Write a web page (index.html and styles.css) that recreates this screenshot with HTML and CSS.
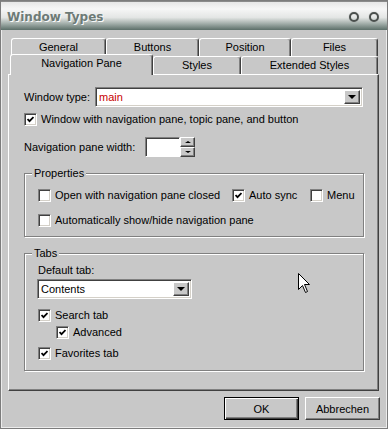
FILE: index.html
```html
<!DOCTYPE html>
<html lang="en">
<head>
<meta charset="UTF-8">
<title>Window Types</title>
<link rel="stylesheet" href="styles.css">
</head>
<body>

  <div class="window">
    <div class="titlebar">
      <span class="title">Window Types</span>
      <span class="title-btns"><span class="ring"></span><span class="ring"></span></span>
    </div>

    <div class="tabs">
      <div class="tab-row back">
        <div class="tab t-general">General</div>
        <div class="tab t-buttons">Buttons</div>
        <div class="tab t-position">Position</div>
        <div class="tab t-files">Files</div>
      </div>
      <div class="tab-row front">
        <div class="tab active t-nav">Navigation Pane</div>
        <div class="tab t-styles">Styles</div>
        <div class="tab t-ext">Extended Styles</div>
      </div>
    </div>

    <div class="panel">
      <div class="row row-type">
        <label class="lbl-type">Window type:</label>
        <div class="combo combo-type">
          <span class="combo-text red">main</span>
          <span class="drop"><span class="arrow"></span></span>
        </div>
      </div>

      <div class="check check-main">
        <span class="cb on"><svg width="7" height="7" viewBox="0 0 7 7"><path d="M0.5 3 L2.5 5.2 L6.5 1" fill="none" stroke="#000" stroke-width="1.8"/></svg></span>
        <span>Window with navigation pane, topic pane, and button</span>
      </div>

      <div class="row row-width">
        <label class="lbl-width">Navigation pane width:</label>
        <div class="spin">
          <span class="spin-input"></span>
          <span class="spin-btns">
            <span class="spin-btn"><span class="arrow up"></span></span>
            <span class="spin-btn"><span class="arrow small"></span></span>
          </span>
        </div>
      </div>

      <div class="group group-props">
        <span class="group-title">Properties</span>
        <div class="check-line first">
          <div class="check w-open"><span class="cb"></span><span>Open with navigation pane closed</span></div>
          <div class="check w-sync"><span class="cb on"><svg width="7" height="7" viewBox="0 0 7 7"><path d="M0.5 3 L2.5 5.2 L6.5 1" fill="none" stroke="#000" stroke-width="1.8"/></svg></span><span>Auto sync</span></div>
          <div class="check"><span class="cb"></span><span>Menu</span></div>
        </div>
        <div class="check-line second">
          <div class="check"><span class="cb"></span><span>Automatically show/hide navigation pane</span></div>
        </div>
      </div>

      <div class="group group-tabs">
        <span class="group-title">Tabs</span>
        <div class="lbl-default">Default tab:</div>
        <div class="combo combo-default">
          <span class="combo-text">Contents</span>
          <span class="drop"><span class="arrow"></span></span>
        </div>
        <div class="check c-search"><span class="cb on"><svg width="7" height="7" viewBox="0 0 7 7"><path d="M0.5 3 L2.5 5.2 L6.5 1" fill="none" stroke="#000" stroke-width="1.8"/></svg></span><span>Search tab</span></div>
        <div class="check c-adv"><span class="cb on"><svg width="7" height="7" viewBox="0 0 7 7"><path d="M0.5 3 L2.5 5.2 L6.5 1" fill="none" stroke="#000" stroke-width="1.8"/></svg></span><span>Advanced</span></div>
        <div class="check c-fav"><span class="cb on"><svg width="7" height="7" viewBox="0 0 7 7"><path d="M0.5 3 L2.5 5.2 L6.5 1" fill="none" stroke="#000" stroke-width="1.8"/></svg></span><span>Favorites tab</span></div>
      </div>
    </div>

    <div class="footer">
      <button class="btn default">OK</button>
      <button class="btn">Abbrechen</button>
    </div>

    <svg class="cursor" width="13" height="21" viewBox="0 0 13 21">
      <path d="M0.5 0.5 L0.5 16.5 L4.5 12.5 L7.5 19.5 L9.5 18.5 L6.5 11.5 L11.5 11.5 Z" fill="#fff" stroke="#000" stroke-width="1"/>
    </svg>
  </div>

</body>
</html>
```

FILE: styles.css
```css
body {
  margin: 0;
  font-family: "Liberation Sans", Arial, sans-serif;
  font-size: 11px;
  color: #000;
}

.window {
  position: relative;
  width: 388px;
  height: 429px;
  box-sizing: border-box;
  background: #c8c8c8;
  border: 1px solid #7c7c7c;
  box-shadow: inset 1px 1px 0 #ececec, inset -1px -1px 0 #ececec;
}

/* title bar */
.titlebar {
  height: 28px;
  display: flex;
  align-items: center;
  justify-content: space-between;
  padding: 0 8px 0 6px;
  border-top: 1px solid #8a8a8a;
  background: linear-gradient(#e6e6e6 0%, #f6f6f6 25%, #e4e6e5 55%, #a9b4b0 75%, #5c6f69 100%);
}

.title {
  font-family: "DejaVu Sans", Verdana, sans-serif;
  font-weight: bold;
  font-size: 12px;
  color: #6d7a76;
  text-shadow: 1px 1px 0 #fafafa;
  margin-top: 2px;
}

.title-btns {
  display: flex;
  gap: 10px;
  margin-top: 1px;
}

.ring {
  width: 6px;
  height: 6px;
  border: 2px solid #4a4f4d;
  border-radius: 50%;
  box-shadow: 0 0 1px #888;
}

/* tabs */
.tabs {
  margin-top: 8px;
  padding-left: 10px;
}

.tab-row {
  display: flex;
  align-items: flex-end;
  height: 18px;
}

.tab-row.front {
  margin-left: -1px;
}

.tab {
  position: relative;
  box-sizing: border-box;
  height: 18px;
  line-height: 17px;
  text-align: center;
  border-top: 1px solid #fff;
  border-left: 1px solid #fff;
  border-right: 1px solid #404040;
  border-radius: 3px 3px 0 0;
  box-shadow: inset -1px 0 0 #808080;
  background: #c8c8c8;
}

.t-general { width: 95px; }
.t-buttons { width: 93px; }
.t-position { width: 92px; }
.t-files { width: 87px; }
.t-nav { width: 143px; }
.t-styles { width: 88px; }
.t-ext { width: 137px; }

.tab.active {
  z-index: 2;
  height: 21px;
  line-height: 16px;
  margin-bottom: -1px;
}

/* main panel */
.panel {
  margin-left: 7px;
  width: 371px;
  height: 317px;
  box-sizing: border-box;
  padding: 12px 0 0 15px;
  border-top: 1px solid #fff;
  border-left: 1px solid #fff;
  border-right: 1px solid #404040;
  border-bottom: 1px solid #404040;
  box-shadow: inset -1px -1px 0 #808080;
}

.row {
  display: flex;
  align-items: center;
  height: 20px;
}

.lbl-type { width: 71px; }
.lbl-width { width: 121px; }
.row-width { margin-top: 11px; }

.combo {
  display: flex;
  box-sizing: border-box;
  height: 20px;
  background: #fff;
  border: 1px solid;
  border-color: #808080 #fff #fff #808080;
  box-shadow: inset 1px 1px 0 #404040, inset -1px -1px 0 #d4d0c8;
  padding: 2px;
}

.combo-type { width: 268px; }

.combo-default {
  width: 155px;
  margin: 2px 0 0 -1px;
}

.combo-text {
  flex: 1;
  line-height: 14px;
  padding-left: 1px;
}

.red { color: #c80000; }

.drop {
  width: 16px;
  display: flex;
  align-items: center;
  justify-content: center;
  box-sizing: border-box;
  background: #c8c8c8;
  border: 1px solid;
  border-color: #fff #404040 #404040 #fff;
  box-shadow: inset -1px -1px 0 #808080;
}

.arrow {
  width: 0;
  height: 0;
  border-left: 4px solid transparent;
  border-right: 4px solid transparent;
  border-top: 4px solid #000;
}

.arrow.small {
  border-left-width: 3px;
  border-right-width: 3px;
  border-top-width: 2px;
}

.arrow.up {
  border-left: 3px solid transparent;
  border-right: 3px solid transparent;
  border-top: 0;
  border-bottom: 2px solid #000;
}

/* spin box */
.spin {
  display: flex;
  height: 20px;
}

.spin-input {
  width: 35px;
  box-sizing: border-box;
  background: #fff;
  border: 1px solid;
  border-color: #808080 #fff #fff #808080;
  box-shadow: inset 1px 1px 0 #404040;
}

.spin-btns {
  display: flex;
  flex-direction: column;
  width: 15px;
}

.spin-btn {
  flex: 1;
  display: flex;
  align-items: center;
  justify-content: center;
  box-sizing: border-box;
  border: 1px solid;
  border-color: #fff #404040 #404040 #fff;
  box-shadow: inset -1px -1px 0 #808080;
}

/* checkboxes */
.check {
  display: flex;
  align-items: center;
  gap: 4px;
  height: 13px;
  line-height: 13px;
  white-space: nowrap;
}

.check-main { margin-top: 6px; }

.cb {
  display: flex;
  align-items: center;
  justify-content: center;
  width: 13px;
  height: 13px;
  flex: none;
  box-sizing: border-box;
  background: #fff;
  border: 1px solid;
  border-color: #808080 #fff #fff #808080;
  box-shadow: inset 1px 1px 0 #404040, inset -1px -1px 0 #d4d0c8;
}

/* group boxes */
.group {
  box-sizing: border-box;
  width: 340px;
  padding-left: 13px;
  border: 1px solid #808080;
  box-shadow: inset 1px 1px 0 #fff, 1px 1px 0 #fff;
}

.group-title {
  display: block;
  width: fit-content;
  margin: -7px 0 0 -6px;
  padding: 0 2px;
  line-height: 13px;
  background: #c8c8c8;
}

.group-props {
  margin-top: 16px;
  height: 64px;
}

.check-line {
  display: flex;
}

.check-line.first { margin-top: 9px; }
.check-line.second { margin-top: 12px; }

.w-open { width: 194px; }
.w-sync { width: 78px; }

.group-tabs {
  margin-top: 16px;
  height: 118px;
}

.lbl-default {
  margin-top: 4px;
  line-height: 13px;
}

.c-search { margin-top: 10px; }
.c-adv { margin: 4px 0 0 18px; }
.c-fav { margin-top: 8px; }

/* buttons */
.footer {
  display: flex;
  justify-content: flex-end;
  gap: 6px;
  margin-top: 6px;
  padding-right: 7px;
}

.btn {
  width: 75px;
  height: 23px;
  padding: 0;
  font-family: "Liberation Sans", Arial, sans-serif;
  font-size: 11px;
  color: #000;
  background: #c8c8c8;
  border: 1px solid;
  border-color: #fff #404040 #404040 #fff;
  box-shadow: inset -1px -1px 0 #808080;
}

.btn.default {
  border: 1px solid #000;
  box-shadow: inset 1px 1px 0 #fff, inset -1px -1px 0 #404040, inset -2px -2px 0 #808080;
}

.cursor {
  position: absolute;
  left: 297px;
  top: 272px;
}
```
